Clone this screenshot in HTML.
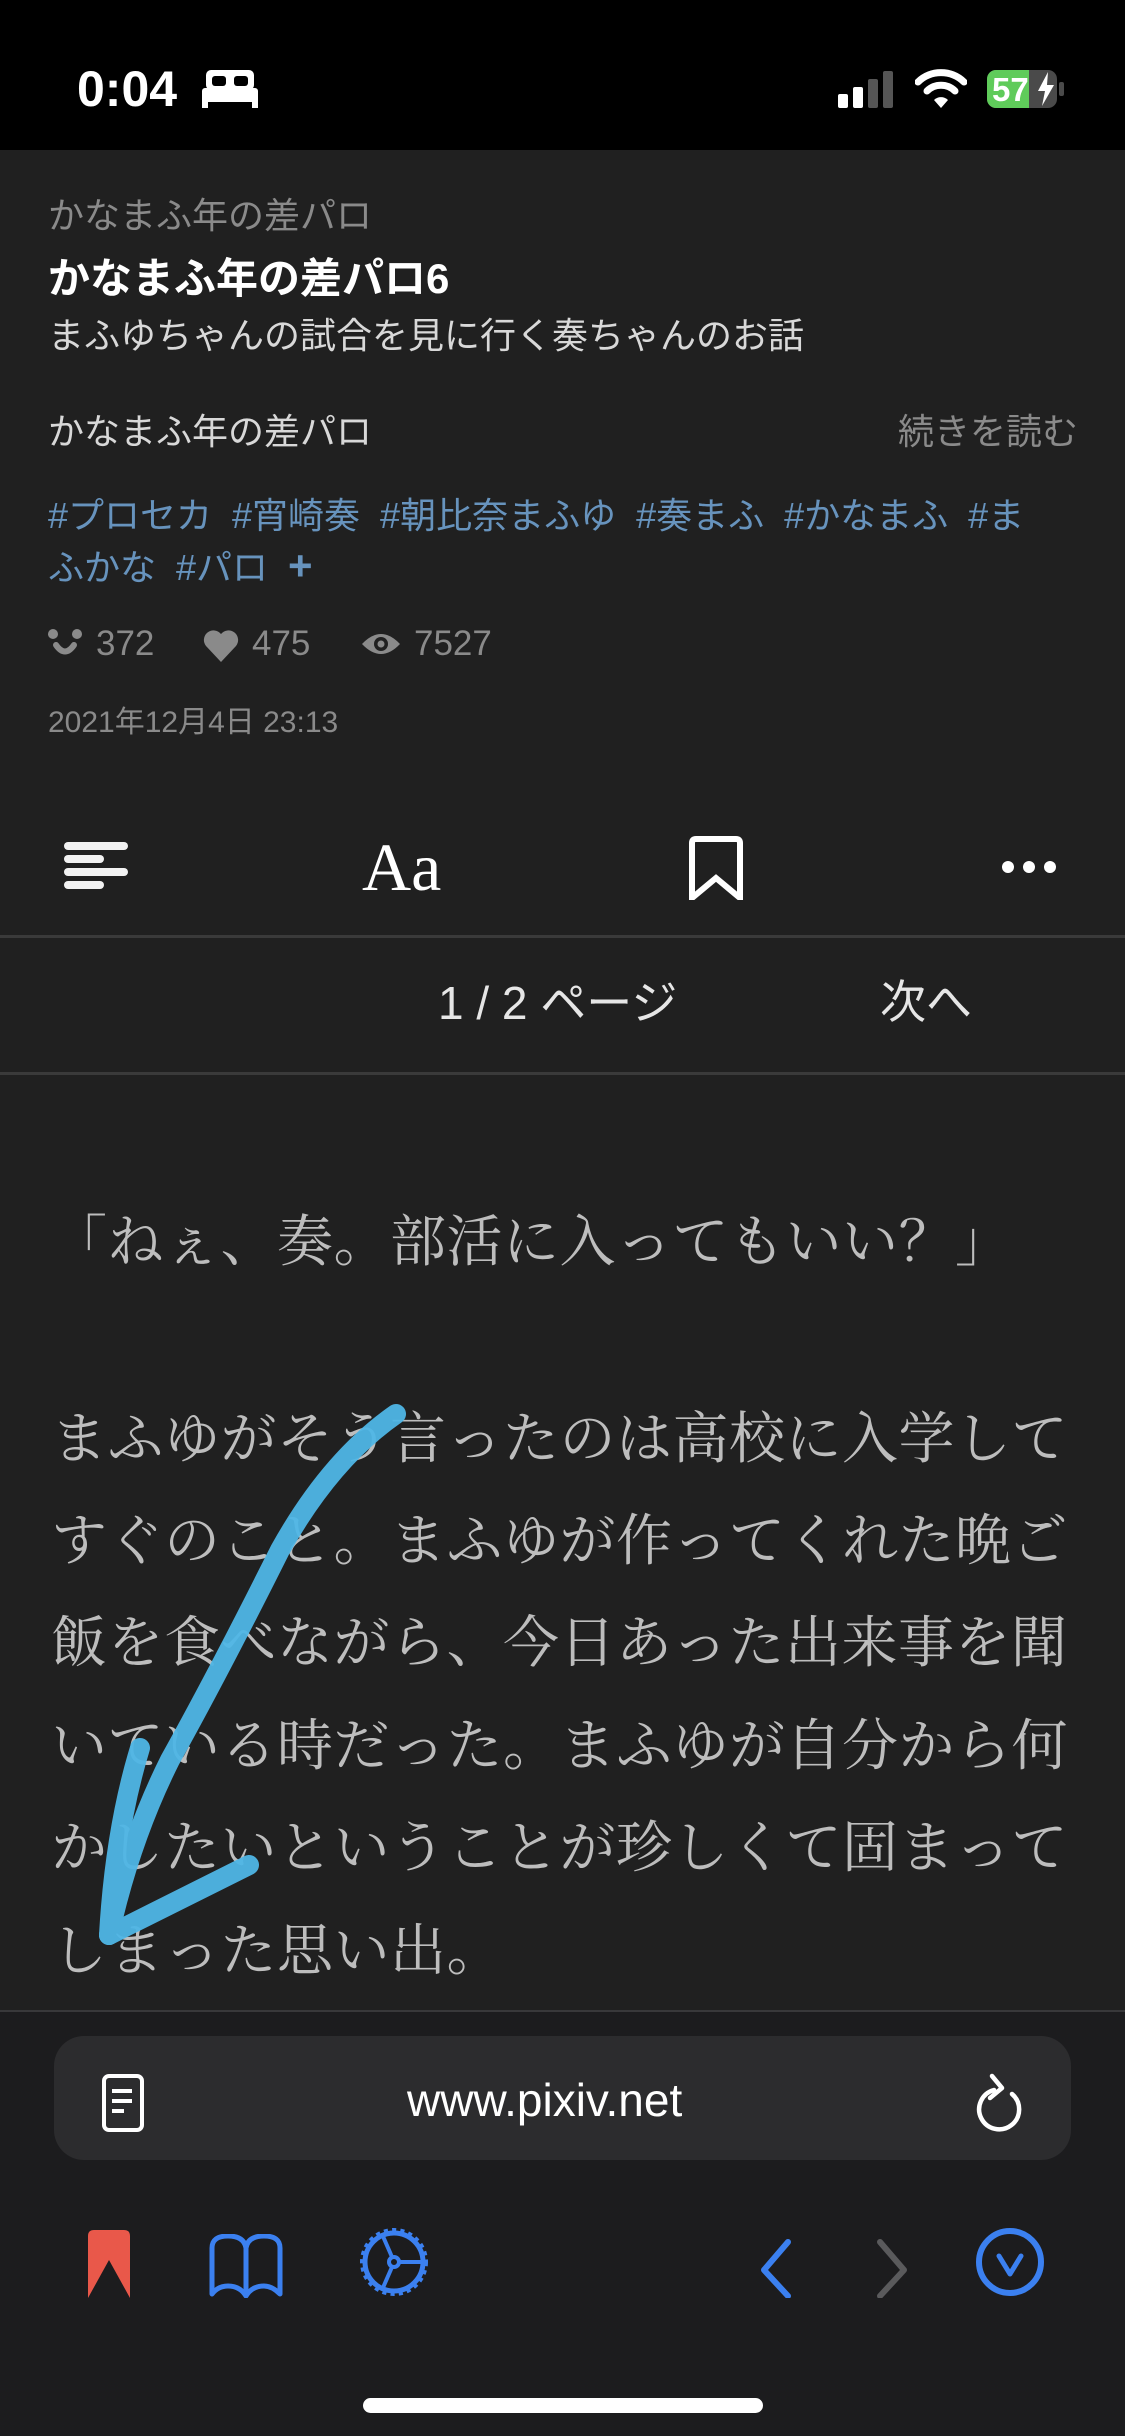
<!DOCTYPE html>
<html><head><meta charset="utf-8"><style>
*{margin:0;padding:0;box-sizing:border-box}
body{width:1125px;height:2436px;background:#202020;position:relative;overflow:hidden;font-family:"Liberation Sans","Noto Sans CJK JP",sans-serif}
.a{position:absolute;white-space:nowrap;line-height:1;display:block}
.body{font-family:"Liberation Serif","Noto Serif CJK SC",serif;color:#bdbdbd;font-size:56px;letter-spacing:0.5px}
</style></head><body>
<div class="a" style="left:0;top:0;width:1125px;height:150px;background:#000"></div>
<div class="a" style="left:77px;top:64px;color:#fff;font-size:50px;font-weight:bold">0:04</div>
<svg class="a" style="left:202px;top:68px" width="56" height="42" viewBox="0 0 56 42"><rect x="4" y="2" width="48" height="20" rx="5" fill="#fff"/><rect x="10" y="8" width="14" height="10" rx="3" fill="#000"/><rect x="32" y="8" width="14" height="10" rx="3" fill="#000"/><rect x="0" y="20" width="56" height="14" rx="3" fill="#fff"/><rect x="0" y="30" width="6" height="10" fill="#fff"/><rect x="50" y="30" width="6" height="10" fill="#fff"/></svg>
<svg class="a" style="left:838px;top:70px" width="60" height="38"><rect x="0" y="24" width="10" height="14" rx="2" fill="#fff"/><rect x="15" y="17" width="10" height="21" rx="2" fill="#fff"/><rect x="30" y="9" width="10" height="29" rx="2" fill="#555"/><rect x="45" y="1" width="10" height="37" rx="2" fill="#555"/></svg>
<svg class="a" style="left:915px;top:66px" width="52" height="44" viewBox="0 0 52 44"><path d="M3 16 A33 33 0 0 1 49 16" stroke="#fff" stroke-width="7" fill="none" stroke-linecap="round"/><path d="M12 25 A20 20 0 0 1 40 25" stroke="#fff" stroke-width="7" fill="none" stroke-linecap="round"/><path d="M19 34 L26 42 L33 34 A10 10 0 0 0 19 34Z" fill="#fff"/></svg>
<div class="a" style="left:987px;top:70px;width:70px;height:38px;border-radius:9px;background:#4a4a4a;overflow:hidden"><div style="width:42px;height:38px;background:#5fcb5a"></div></div>
<div class="a" style="left:1059px;top:82px;width:5px;height:14px;border-radius:2px;background:#4a4a4a"></div>
<div class="a" style="left:992px;top:73px;color:#fff;font-size:33px;font-weight:bold">57</div>
<svg class="a" style="left:1036px;top:72px" width="20" height="34"><path d="M12 0 L2 19 H9 L6 34 L18 13 H11Z" fill="#fff"/></svg>

<div class="a" style="left:48px;top:198px;color:#8a8a8a;font-size:36px">かなまふ年の差パロ</div>
<div class="a" style="left:48px;top:258px;color:#fff;font-size:42px;font-weight:bold">かなまふ年の差パロ6</div>
<div class="a" style="left:48px;top:318px;color:#d8d8d8;font-size:36px">まふゆちゃんの試合を見に行く奏ちゃんのお話</div>
<div class="a" style="left:48px;top:414px;color:#d8d8d8;font-size:36px">かなまふ年の差パロ</div>
<div class="a" style="left:898px;top:414px;color:#8a8a8a;font-size:36px">続きを読む</div>
<div class="a" style="left:48px;top:498px;color:#6793bd;font-size:36px">#プロセカ&nbsp;&nbsp;#宵崎奏&nbsp;&nbsp;#朝比奈まふゆ&nbsp;&nbsp;#奏まふ&nbsp;&nbsp;#かなまふ&nbsp;&nbsp;#ま</div>
<div class="a" style="left:48px;top:545px;color:#6793bd;font-size:36px">ふかな&nbsp;&nbsp;#パロ&nbsp;&nbsp;<b style="font-size:42px">+</b></div>
<svg class="a" style="left:48px;top:628px" width="34" height="30"><circle cx="5" cy="6" r="5" fill="#8a8a8a"/><circle cx="29" cy="6" r="5" fill="#8a8a8a"/><path d="M8 17 Q17 30 26 17" stroke="#8a8a8a" stroke-width="6" fill="none" stroke-linecap="round"/></svg>
<div class="a" style="left:96px;top:626px;color:#8a8a8a;font-size:35px">372</div>
<svg class="a" style="left:202px;top:628px" width="38" height="34" viewBox="0 0 38 34"><path d="M19 34 L4 18 A9 9 0 0 1 19 6 A9 9 0 0 1 34 18Z" fill="#8a8a8a"/></svg>
<div class="a" style="left:252px;top:626px;color:#8a8a8a;font-size:35px">475</div>
<svg class="a" style="left:360px;top:630px" width="42" height="28"><path d="M2 14 Q21 -6 40 14 Q21 34 2 14Z" fill="#8a8a8a"/><circle cx="21" cy="14" r="7" fill="#202020"/><circle cx="21" cy="14" r="3.5" fill="#8a8a8a"/></svg>
<div class="a" style="left:414px;top:626px;color:#8a8a8a;font-size:35px">7527</div>
<div class="a" style="left:48px;top:708px;color:#8a8a8a;font-size:30px">2021年12月4日 23:13</div>

<svg class="a" style="left:64px;top:842px" width="66" height="48"><g fill="#f2f2f2"><rect x="0" y="0" width="64" height="8" rx="4"/><rect x="0" y="13" width="40" height="8" rx="4"/><rect x="0" y="26" width="64" height="8" rx="4"/><rect x="0" y="39" width="40" height="8" rx="4"/></g></svg>
<div class="a" style="left:362px;top:833px;color:#fff;font-size:68px;font-family:'Liberation Serif',serif">Aa</div>
<svg class="a" style="left:688px;top:836px" width="56" height="64"><path d="M4 62 V7 Q4 3 8 3 H48 Q52 3 52 7 V62 L28 42Z" stroke="#fff" stroke-width="6" fill="none"/></svg>
<svg class="a" style="left:1000px;top:857px" width="58" height="20"><circle cx="8" cy="10" r="6" fill="#fff"/><circle cx="29" cy="10" r="6" fill="#fff"/><circle cx="50" cy="10" r="6" fill="#fff"/></svg>
<div class="a" style="left:0;top:935px;width:1125px;height:3px;background:#3a3a3a"></div>
<div class="a" style="left:438px;top:980px;color:#e6e6e6;font-size:46px">1 / 2 ページ</div>
<div class="a" style="left:880px;top:979px;color:#e6e6e6;font-size:46px">次へ</div>
<div class="a" style="left:0;top:1072px;width:1125px;height:3px;background:#3a3a3a"></div>

<div class="a body" style="left:51px;top:1215px">「ねぇ、奏。部活に入ってもいい？」</div>
<div class="a body" style="left:51px;top:1412px">まふゆがそう言ったのは高校に入学して</div>
<div class="a body" style="left:51px;top:1514px">すぐのこと。まふゆが作ってくれた晩ご</div>
<div class="a body" style="left:51px;top:1616px">飯を食べながら、今日あった出来事を聞</div>
<div class="a body" style="left:51px;top:1719px">いている時だった。まふゆが自分から何</div>
<div class="a body" style="left:51px;top:1821px">かしたいということが珍しくて固まって</div>
<div class="a body" style="left:51px;top:1924px">しまった思い出。</div>

<svg class="a" style="left:0;top:1380px" width="450" height="600"><g stroke="#4fb6e6" stroke-width="20" fill="none" stroke-linecap="round" stroke-linejoin="round" opacity="0.95"><path d="M396 34 Q330 80 280 170 Q220 290 170 380 Q130 460 109 555"/><path d="M109 555 L249 485"/><path d="M109 555 Q115 450 140 368"/></g></svg>

<div class="a" style="left:0;top:2010px;width:1125px;height:426px;background:#1c1c1e"></div>
<div class="a" style="left:0;top:2010px;width:1125px;height:2px;background:#38383a"></div>
<div class="a" style="left:54px;top:2036px;width:1017px;height:124px;border-radius:30px;background:#2c2c2e"></div>
<svg class="a" style="left:100px;top:2073px" width="46" height="60"><rect x="4" y="3" width="38" height="54" rx="5" stroke="#fff" stroke-width="4" fill="none"/><g stroke="#fff" stroke-width="4"><line x1="12" y1="18" x2="32" y2="18"/><line x1="12" y1="28" x2="32" y2="28"/><line x1="12" y1="38" x2="24" y2="38"/></g></svg>
<div class="a" style="left:407px;top:2077px;color:#fff;font-size:46px">www.pixiv.net</div>
<svg class="a" style="left:974px;top:2072px" width="52" height="64"><path d="M38 22 A20 20 0 1 1 20 18" stroke="#fff" stroke-width="4.5" fill="none" stroke-linecap="round"/><path d="M18 4 L28 16 L16 26" stroke="#fff" stroke-width="4.5" fill="none" stroke-linecap="round" stroke-linejoin="round"/></svg>

<svg class="a" style="left:86px;top:2230px" width="46" height="68"><path d="M2 6 Q2 0 8 0 H38 Q44 0 44 6 V68 L23 30 L2 68Z" fill="#e9584a"/></svg>
<svg class="a" style="left:208px;top:2234px" width="76" height="64"><path d="M4 60 V14 Q4 2 20 2 Q36 2 38 14 Q40 2 56 2 Q72 2 72 14 V60 Q64 52 56 52 Q44 52 38 62 Q32 52 20 52 Q10 52 4 60Z M38 14 V60" stroke="#3b80f0" stroke-width="5" fill="none" stroke-linejoin="round"/></svg>
<svg class="a" style="left:356px;top:2222px" width="76" height="80" viewBox="0 0 76 80"><circle cx="38" cy="40" r="31" stroke="#3b80f0" stroke-width="6" fill="none" stroke-dasharray="4 4"/><circle cx="38" cy="40" r="29" stroke="#3b80f0" stroke-width="5" fill="none"/><circle cx="38" cy="40" r="5" stroke="#3b80f0" stroke-width="4" fill="#1c1c1e"/><g stroke="#3b80f0" stroke-width="4"><line x1="36" y1="35" x2="26" y2="12"/><line x1="36" y1="45" x2="26" y2="68"/><line x1="43" y1="40" x2="70" y2="40"/></g></svg>
<svg class="a" style="left:756px;top:2238px" width="40" height="60"><path d="M32 4 L8 32 L32 58" stroke="#3b80f0" stroke-width="6" fill="none" stroke-linecap="round" stroke-linejoin="round"/></svg>
<svg class="a" style="left:872px;top:2238px" width="40" height="60"><path d="M8 4 L32 32 L8 58" stroke="#5a5a5c" stroke-width="6" fill="none" stroke-linecap="round" stroke-linejoin="round"/></svg>
<svg class="a" style="left:974px;top:2226px" width="72" height="72"><circle cx="36" cy="36" r="31" stroke="#3b80f0" stroke-width="6" fill="none"/><path d="M25 30 L36 48 L47 30" stroke="#3b80f0" stroke-width="5" fill="none" stroke-linecap="round" stroke-linejoin="round"/></svg>
<div class="a" style="left:363px;top:2398px;width:400px;height:15px;border-radius:8px;background:#fff"></div>
</body></html>
